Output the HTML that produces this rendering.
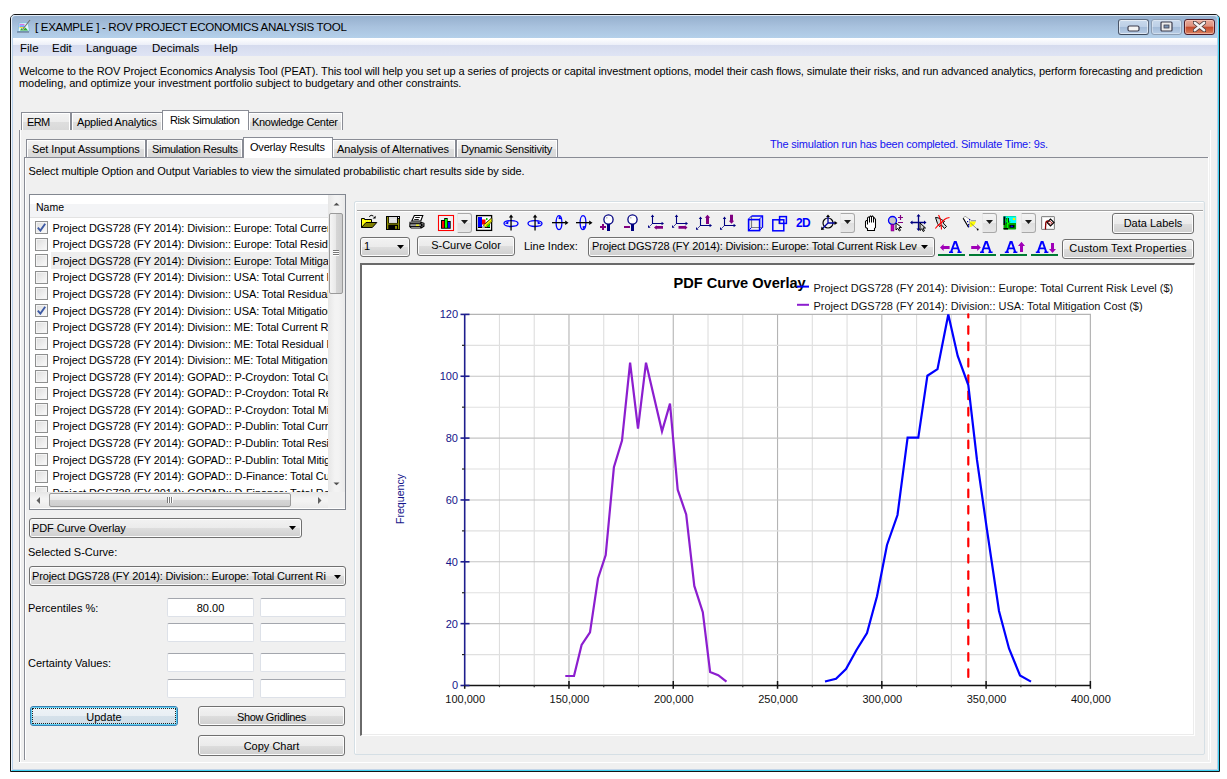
<!DOCTYPE html>
<html><head><meta charset="utf-8">
<style>
*{box-sizing:border-box;margin:0;padding:0}
html,body{width:1227px;height:779px;overflow:hidden;background:#fff;font-family:"Liberation Sans",sans-serif;font-size:11px;color:#000}
.a{position:absolute}
.t{position:absolute;white-space:pre;line-height:13px;font-size:11px}
.cbtn{position:absolute;height:16px;border:1px solid #44506a;border-radius:3px;background:linear-gradient(#c9d9ec,#bccfe6 50%,#a3bbd8 52%,#b8cde6)}
.tab{position:absolute;border:1px solid #898c95;border-bottom:none;background:linear-gradient(#f3f3f3,#ececec 50%,#dedede 52%,#d9d9d9);box-shadow:inset 1px 1px 0 #fff,inset -1px 0 0 #fff}
.tabsel{position:absolute;border:1px solid #898c95;border-bottom:none;background:#fff}
.btn{position:absolute;border:1px solid #707070;border-radius:3px;background:linear-gradient(#f2f2f2,#ebebeb 50%,#dddddd 52%,#cfcfcf);box-shadow:inset 0 0 0 1px #fcfcfc;text-align:center;line-height:17px}
.cb{position:absolute;width:13px;height:13px;border:1px solid #8e8f8f;background:linear-gradient(135deg,#dcdcdc,#fbfbfb);box-shadow:inset 0 0 0 1px #f4f4f4}
.combo{position:absolute;border:1px solid #707070;border-radius:3px;background:linear-gradient(#f2f2f2,#ebebeb 50%,#dddddd 52%,#cfcfcf);box-shadow:inset 0 0 0 1px #fcfcfc}
.tb{position:absolute;border:1px solid #dde1e8;border-top-color:#a3a6ad;border-radius:2px;background:#fff}
</style></head><body>
<!-- window frame -->
<div class="a" style="left:10px;top:14px;width:1210px;height:758px;border:1px solid #151515;border-radius:5px 5px 0 0;background:#b9d1ea"></div>
<div class="a" style="left:11px;top:15px;width:1208px;height:756px;border-left:1px solid #eef4fb;border-top:1px solid #e2ecf7;border-right:1px solid #3fd2f2;border-bottom:1px solid #3fd2f2;border-radius:4px 4px 0 0"></div>
<div class="a" style="left:12px;top:16px;width:1205px;height:22px;background:linear-gradient(#96b0ce,#a9c2de 50%,#b4d0ea);border-radius:4px 4px 0 0"></div>
<div class="t" style="left:35px;top:20.2px;color:#000;font-size:11.6px;letter-spacing:-0.33px">[ EXAMPLE ] - ROV PROJECT ECONOMICS ANALYSIS TOOL</div>
<div class="cbtn" style="left:1118px;top:19px;width:31px;border-color:#5d6a7e #5d6a7e #3f4a5c #4a5568;box-shadow:inset 0 0 0 1px rgba(255,255,255,0.55)"></div>
<div class="cbtn" style="left:1151px;top:19px;width:31px;border-color:#8c9db3;box-shadow:inset 0 0 0 1px rgba(255,255,255,0.35)"></div>
<div class="cbtn" style="left:1184px;top:19px;width:31px;border-color:#4e1c28;box-shadow:inset 0 0 0 1px rgba(255,220,210,0.5);background:linear-gradient(#e9aa9a,#dd917d 45%,#c3482a 50%,#d2704f 85%,#dc8a6e)"></div>
<svg class="a" style="left:1127px;top:25px" width="13" height="7"><rect x="1" y="1" width="11" height="5" rx="1.5" fill="#f4f4f4" stroke="#3d3d4d" stroke-width="1.2"/></svg>
<svg class="a" style="left:1160px;top:21px" width="13" height="11"><rect x="1" y="1" width="11" height="9" rx="1" fill="#ececec" stroke="#3d3d4d" stroke-width="1.2"/><rect x="4" y="4" width="5" height="3" fill="#7a93b3" stroke="#3d3d4d" stroke-width="0.8"/></svg>
<svg class="a" style="left:1193px;top:21px" width="13" height="11" viewBox="0 0 13 11"><path d="M1.5 1.5 L11.5 9.5 M11.5 1.5 L1.5 9.5" stroke="#4a3a3a" stroke-width="4" stroke-linecap="round"/><path d="M1.8 1.8 L11.2 9.2 M11.2 1.8 L1.8 9.2" stroke="#f4f4f4" stroke-width="2.4" stroke-linecap="round"/></svg>
<svg class="a" style="left:17px;top:19px" width="14" height="14" viewBox="0 0 14 14"><path d="M1 12.5 L2 4 L11 3.5 L12.5 12 Z" fill="#dff6ff" stroke="#7fb8d8" stroke-width="0.8"/><rect x="2.5" y="5" width="5" height="1.2" fill="#e070e0"/><rect x="2.5" y="6.5" width="5" height="1.2" fill="#4080ff"/><rect x="2.5" y="8" width="5" height="1.2" fill="#f0e040"/><path d="M3 11.5 L4.5 9 L6 11 L8.5 8.5 L11 11.5 Z" fill="#30b030"/><path d="M5.5 10.5 L13 1" stroke="#707070" stroke-width="1.1"/><path d="M0 13 H12" stroke="#202840" stroke-width="1" opacity="0.6"/></svg>
<!-- client -->
<div class="a" style="left:13px;top:38px;width:1204px;height:731px;background:#f0f0f0"></div>
<div class="a" style="left:13px;top:38px;width:1204px;height:18px;background:linear-gradient(#ffffff,#eceff8 38%,#d5dbee 40%,#dfe4f4)"></div>
<div class="a" style="left:12px;top:769px;width:1206px;height:1px;background:#c4d5e8"></div>
<div class="t" style="left:20px;top:42px;font-size:11.5px">File</div>
<div class="t" style="left:52px;top:42px;font-size:11.5px">Edit</div>
<div class="t" style="left:86px;top:42px;font-size:11.5px">Language</div>
<div class="t" style="left:152px;top:42px;font-size:11.5px">Decimals</div>
<div class="t" style="left:214px;top:42px;font-size:11.5px">Help</div>
<div class="t" style="left:19px;top:65px;letter-spacing:-0.1px">Welcome to the ROV Project Economics Analysis Tool (PEAT). This tool will help you set up a series of projects or capital investment options, model their cash flows, simulate their risks, and run advanced analytics, perform forecasting and prediction</div>
<div class="t" style="left:19px;top:77px;letter-spacing:-0.05px">modeling, and optimize your investment portfolio subject to budgetary and other constraints.</div>

<!-- outer tabs -->
<div class="a" style="left:19px;top:130px;width:1px;height:632px;background:#898c95"></div>
<div class="a" style="left:20px;top:130px;width:1px;height:632px;background:#fff"></div>
<div class="a" style="left:19px;top:762px;width:1192px;height:1px;background:#fff"></div>
<div class="a" style="left:1210px;top:130px;width:1px;height:633px;background:#fff"></div>
<div class="tab" style="left:21px;top:112px;width:50px;height:18px"></div>
<div class="tab" style="left:71px;top:112px;width:92px;height:18px"></div>
<div class="tab" style="left:248px;top:112px;width:95px;height:18px"></div>
<div class="tabsel" style="left:162px;top:110px;width:87px;height:20px"></div>
<div class="t" style="left:27px;top:116px;letter-spacing:-0.6px">ERM</div>
<div class="t" style="left:77px;top:116px;letter-spacing:-0.19px">Applied Analytics</div>
<div class="t" style="left:170px;top:114px;letter-spacing:-0.43px">Risk Simulation</div>
<div class="t" style="left:252px;top:116px;letter-spacing:-0.31px">Knowledge Center</div>

<!-- inner tabs -->
<div class="a" style="left:24px;top:157px;width:1184px;height:1px;background:#898c95"></div>
<div class="a" style="left:24px;top:157px;width:1px;height:603px;background:#898c95"></div>
<div class="a" style="left:25px;top:158px;width:1px;height:601px;background:#fff"></div>
<div class="a" style="left:1208px;top:157px;width:1px;height:603px;background:#fff"></div>

<div class="tab" style="left:26px;top:139px;width:120px;height:18px"></div>
<div class="tab" style="left:146px;top:139px;width:97px;height:18px"></div>
<div class="tab" style="left:332px;top:139px;width:124px;height:18px"></div>
<div class="tab" style="left:456px;top:139px;width:102px;height:18px"></div>
<div class="tabsel" style="left:243px;top:137px;width:90px;height:21px"></div>
<div class="t" style="left:32px;top:143px;letter-spacing:-0.08px">Set Input Assumptions</div>
<div class="t" style="left:152px;top:143px;letter-spacing:-0.3px">Simulation Results</div>
<div class="t" style="left:250px;top:141px;letter-spacing:-0.19px">Overlay Results</div>
<div class="t" style="left:337px;top:143px;letter-spacing:-0.05px">Analysis of Alternatives</div>
<div class="t" style="left:461px;top:143px;letter-spacing:-0.23px">Dynamic Sensitivity</div>
<div class="t" style="left:770px;top:138px;color:#1414f0;letter-spacing:-0.2px">The simulation run has been completed. Simulate Time: 9s.</div>
<div class="t" style="left:28.5px;top:165px;letter-spacing:-0.1px">Select multiple Option and Output Variables to view the simulated probabilistic chart results side by side.</div>

<!-- LEFT PANEL -->
<div id="left"></div>
<div class="a" style="left:29px;top:194px;width:317px;height:316px;border:1px solid #828790;background:#fff"></div>
<div class="a" style="left:30px;top:204px;width:298px;height:13px;background:#f3f4f6"></div>
<div class="a" style="left:30px;top:217px;width:298px;height:1px;background:#e3e3e3"></div>
<div class="t" style="left:36px;top:201px;font-size:10.5px">Name</div>
<div class="a" style="left:30px;top:217px;width:298px;height:275px;overflow:hidden">
<div class="a" style="left:21px;top:35.2px;width:277px;height:16.8px;background:#eeeeee"></div>
<div class="cb" style="left:5px;top:4.20px"></div>
<svg class="a" style="left:7px;top:6.20px" width="9" height="9" viewBox="0 0 9 9"><path d="M0.8 4.6 L3.4 7.6 L8.2 0.8" fill="none" stroke="#3d5aa4" stroke-width="1.9"/></svg>
<div class="t" style="left:22.5px;top:4.70px;letter-spacing:-0.1px">Project DGS728 (FY 2014): Division:: Europe: Total Current Risk Level ($)</div>
<div class="cb" style="left:5px;top:20.76px"></div>
<div class="t" style="left:22.5px;top:21.26px;letter-spacing:-0.1px">Project DGS728 (FY 2014): Division:: Europe: Total Residual Risk Level ($)</div>
<div class="cb" style="left:5px;top:37.32px"></div>
<div class="t" style="left:22.5px;top:37.82px;letter-spacing:-0.1px">Project DGS728 (FY 2014): Division:: Europe: Total Mitigation Cost ($)</div>
<div class="cb" style="left:5px;top:53.88px"></div>
<div class="t" style="left:22.5px;top:54.38px;letter-spacing:-0.1px">Project DGS728 (FY 2014): Division:: USA: Total Current Risk Level ($)</div>
<div class="cb" style="left:5px;top:70.44px"></div>
<div class="t" style="left:22.5px;top:70.94px;letter-spacing:-0.1px">Project DGS728 (FY 2014): Division:: USA: Total Residual Risk Level ($)</div>
<div class="cb" style="left:5px;top:87.00px"></div>
<svg class="a" style="left:7px;top:89.00px" width="9" height="9" viewBox="0 0 9 9"><path d="M0.8 4.6 L3.4 7.6 L8.2 0.8" fill="none" stroke="#3d5aa4" stroke-width="1.9"/></svg>
<div class="t" style="left:22.5px;top:87.50px;letter-spacing:-0.1px">Project DGS728 (FY 2014): Division:: USA: Total Mitigation Cost ($)</div>
<div class="cb" style="left:5px;top:103.56px"></div>
<div class="t" style="left:22.5px;top:104.06px;letter-spacing:-0.1px">Project DGS728 (FY 2014): Division:: ME: Total Current Risk Level ($)</div>
<div class="cb" style="left:5px;top:120.12px"></div>
<div class="t" style="left:22.5px;top:120.62px;letter-spacing:-0.1px">Project DGS728 (FY 2014): Division:: ME: Total Residual Risk Level ($)</div>
<div class="cb" style="left:5px;top:136.68px"></div>
<div class="t" style="left:22.5px;top:137.18px;letter-spacing:-0.1px">Project DGS728 (FY 2014): Division:: ME: Total Mitigation Cost ($)</div>
<div class="cb" style="left:5px;top:153.24px"></div>
<div class="t" style="left:22.5px;top:153.74px;letter-spacing:-0.1px">Project DGS728 (FY 2014): GOPAD:: P-Croydon: Total Current Risk Level ($)</div>
<div class="cb" style="left:5px;top:169.80px"></div>
<div class="t" style="left:22.5px;top:170.30px;letter-spacing:-0.1px">Project DGS728 (FY 2014): GOPAD:: P-Croydon: Total Residual Risk Level ($)</div>
<div class="cb" style="left:5px;top:186.36px"></div>
<div class="t" style="left:22.5px;top:186.86px;letter-spacing:-0.1px">Project DGS728 (FY 2014): GOPAD:: P-Croydon: Total Mitigation Cost ($)</div>
<div class="cb" style="left:5px;top:202.92px"></div>
<div class="t" style="left:22.5px;top:203.42px;letter-spacing:-0.1px">Project DGS728 (FY 2014): GOPAD:: P-Dublin: Total Current Risk Level ($)</div>
<div class="cb" style="left:5px;top:219.48px"></div>
<div class="t" style="left:22.5px;top:219.98px;letter-spacing:-0.1px">Project DGS728 (FY 2014): GOPAD:: P-Dublin: Total Residual Risk Level ($)</div>
<div class="cb" style="left:5px;top:236.04px"></div>
<div class="t" style="left:22.5px;top:236.54px;letter-spacing:-0.1px">Project DGS728 (FY 2014): GOPAD:: P-Dublin: Total Mitigation Cost ($)</div>
<div class="cb" style="left:5px;top:252.60px"></div>
<div class="t" style="left:22.5px;top:253.10px;letter-spacing:-0.1px">Project DGS728 (FY 2014): GOPAD:: D-Finance: Total Current Risk Level ($)</div>
<div class="cb" style="left:5px;top:269.16px"></div>
<div class="t" style="left:22.5px;top:269.66px;letter-spacing:-0.1px">Project DGS728 (FY 2014): GOPAD:: D-Finance: Total Residual Risk Level ($)</div>
</div>
<div class="a" style="left:328px;top:195px;width:17px;height:297px;background:linear-gradient(90deg,#e6e6e6,#f3f3f3 40%,#f3f3f3 60%,#eaeaea)"></div>
<svg class="a" style="left:332px;top:201px" width="9" height="6"><path d="M1.5 4.5 L4.5 1.8 L7.5 4.5 Z" fill="#505050"/></svg>
<svg class="a" style="left:332px;top:481px" width="9" height="6"><path d="M1.5 1.5 L4.5 4.2 L7.5 1.5 Z" fill="#505050"/></svg>
<div class="a" style="left:329px;top:213px;width:14px;height:81px;border:1px solid #9a9a9a;border-radius:2px;background:linear-gradient(90deg,#f5f5f5,#e8e8e8 50%,#d6d6d6 52%,#cdcdcd)"></div>
<div class="a" style="left:333px;top:250px;width:6px;height:1px;background:#777;box-shadow:0 2px 0 #777,0 4px 0 #777,0 1px 0 #fff,0 3px 0 #fff,0 5px 0 #fff"></div>
<div class="a" style="left:30px;top:492px;width:298px;height:16px;background:linear-gradient(#e6e6e6,#f3f3f3 40%,#f3f3f3 60%,#eaeaea)"></div>
<div class="a" style="left:328px;top:492px;width:17px;height:16px;background:#f0f0f0"></div>
<svg class="a" style="left:35px;top:496px" width="6" height="9"><path d="M5 1 L1.5 4.5 L5 8 Z" fill="#606060"/></svg>
<svg class="a" style="left:317px;top:496px" width="6" height="9"><path d="M1 1 L4.5 4.5 L1 8 Z" fill="#606060"/></svg>
<div class="a" style="left:49px;top:493px;width:242px;height:14px;border:1px solid #9a9a9a;border-radius:2px;background:linear-gradient(#f5f5f5,#e8e8e8 50%,#d6d6d6 52%,#cdcdcd)"></div>
<div class="a" style="left:167px;top:497px;width:1px;height:6px;background:#777;box-shadow:2px 0 0 #777,4px 0 0 #777,1px 0 0 #fff,3px 0 0 #fff,5px 0 0 #fff"></div>
<div class="combo" style="left:29px;top:518px;width:273px;height:20px"></div><div class="t" style="left:32px;top:521.5px;font-size:11px;letter-spacing:-0.1px;width:249px;overflow:hidden">PDF Curve Overlay</div><svg class="a" style="left:289px;top:526px" width="8" height="5"><path d="M0 0 L7 0 L3.5 4 Z" fill="#000"/></svg>
<div class="t" style="left:28px;top:546px">Selected S-Curve:</div>
<div class="combo" style="left:29px;top:566px;width:317px;height:20px"></div><div class="t" style="left:32px;top:570.0px;font-size:11px;letter-spacing:-0.15px;width:294px;overflow:hidden">Project DGS728 (FY 2014): Division:: Europe: Total Current Risk Level ($)</div><svg class="a" style="left:334px;top:574.5px" width="8" height="5"><path d="M0 0 L7 0 L3.5 4 Z" fill="#000"/></svg>
<div class="t" style="left:28px;top:602px">Percentiles %:</div>
<div class="t" style="left:28px;top:657px">Certainty Values:</div>
<div class="tb" style="left:167px;top:598px;width:87px;height:19px"></div>
<div class="tb" style="left:260px;top:598px;width:86px;height:19px"></div>
<div class="tb" style="left:167px;top:623px;width:87px;height:19px"></div>
<div class="tb" style="left:260px;top:623px;width:86px;height:19px"></div>
<div class="tb" style="left:167px;top:653px;width:87px;height:19px"></div>
<div class="tb" style="left:260px;top:653px;width:86px;height:19px"></div>
<div class="tb" style="left:167px;top:679px;width:87px;height:19px"></div>
<div class="tb" style="left:260px;top:679px;width:86px;height:19px"></div>
<div class="t" style="left:167px;top:602px;width:87px;text-align:center">80.00</div>
<div class="a" style="left:30px;top:706px;width:148px;height:20px;border:1px solid #3c7fb1;border-radius:3px;box-shadow:inset 0 0 0 1px #5fd4f7;background:linear-gradient(#eef3f7,#e9eff4 50%,#d5e1ea 52%,#cfdde7)"></div>
<div class="a" style="left:32px;top:708px;width:144px;height:16px;border:1px dotted #222"></div>
<div class="t" style="left:30px;top:711px;width:148px;text-align:center">Update</div>
<div class="btn" style="left:198px;top:706px;width:147px;height:20px"></div>
<div class="t" style="left:198px;top:711px;width:147px;text-align:center;letter-spacing:-0.36px">Show Gridlines</div>
<div class="btn" style="left:198px;top:735px;width:147px;height:21px"></div>
<div class="t" style="left:198px;top:740px;width:147px;text-align:center">Copy Chart</div>

<!-- RIGHT PANEL -->
<div class="a" style="left:354px;top:201px;width:851px;height:554px;border:1px solid #d5dfe5;border-radius:2px;box-shadow:inset 1px 1px 0 #fff"></div>
<div class="a" style="left:357px;top:210px;width:846px;height:1px;background:#a0a0a0"></div>
<div class="a" style="left:357px;top:211px;width:846px;height:1px;background:#fff"></div>
<svg class="a" style="left:358px;top:212px" width="22" height="20" viewBox="0 0 22 20">
<path d="M3.5 15.5 V6.5 H6.5 V7.5 H13.5 V10.5" fill="#ffff00" stroke="#000" stroke-width="1"/>
<path d="M4 9 H13 M4 12 H7" stroke="#fff" stroke-width="0.6" stroke-dasharray="1 1" opacity="0.6"/>
<path d="M3.5 15.5 L8 10.5 H18.8 L14.3 15.5 Z" fill="#808000" stroke="#000" stroke-width="1"/>
<path d="M11.2 4.6 Q13 2.2 15.4 4" fill="none" stroke="#000" stroke-width="1"/>
<path d="M14.6 6.6 L17.6 3.8 V6.6 Z" fill="#000"/>
</svg>
<svg class="a" style="left:383px;top:212px" width="22" height="20" viewBox="0 0 22 20">
<rect x="3" y="4" width="14" height="14" fill="#000"/>
<rect x="4" y="5" width="1.3" height="12" fill="#8c8c00"/><rect x="15" y="7" width="1.2" height="10" fill="#8c8c00"/>
<rect x="4" y="11.5" width="12.2" height="1.2" fill="#8c8c00"/>
<rect x="6" y="5" width="8" height="6" fill="#d6d6d6"/>
<path d="M6.5 5.5 h1 v1 h-1z M8.5 5.5 h1 v1 h-1z M10.5 5.5 h1 v1 h-1z M12.5 5.5 h1 v1 h-1z M7.5 7 h1 v1 h-1z M9.5 7 h1 v1 h-1z M11.5 7 h1 v1 h-1z M6.5 8.5 h1 v1 h-1z M8.5 8.5 h1 v1 h-1z M10.5 8.5 h1 v1 h-1z M12.5 8.5 h1 v1 h-1z" fill="#fff"/>
<rect x="12" y="14" width="2" height="2.8" fill="#8c8c00"/>
<rect x="15" y="5" width="1" height="1" fill="#fff"/>
</svg>
<svg class="a" style="left:406px;top:212px" width="22" height="20" viewBox="0 0 22 20">
<path d="M8.3 3.5 H16.8 L14.8 9 H5.8 Z" fill="#fff" stroke="#000" stroke-width="1.1"/>
<path d="M9.2 5.5 H13.8 M8.2 7.5 H12.8" stroke="#000" stroke-width="0.9"/>
<path d="M3.5 9.8 H15.5 L18.5 11 V14.5 L15.5 16.5 H5 L3.2 14.8 Z" fill="#000"/>
<rect x="4.3" y="10.3" width="10" height="0.9" fill="#9a9a9a"/>
<rect x="4.3" y="12.2" width="10.5" height="1.9" fill="#9a9a9a"/>
<rect x="10" y="12.6" width="3" height="1.2" fill="#ffff00"/>
<rect x="5.2" y="15" width="9" height="0.9" fill="#9a9a9a"/>
<path d="M15.5 11.5 L17 11.2 V13.5 L15.5 15" stroke="#9a9a9a" stroke-width="0.8" fill="none"/>
</svg>
<svg class="a" style="left:436px;top:212px" width="22" height="20" viewBox="0 0 22 20">
<rect x="2.5" y="3.5" width="15" height="15" fill="#f0fbfb" stroke="#ff0000" stroke-width="1.1"/>
<rect x="4" y="5" width="12" height="12" fill="#efefef"/>
<path d="M5 8 H8.2 V6 H11.7 V9 H14.7 V16.7 H5 Z" fill="#000"/>
<rect x="6" y="9" width="2.2" height="6.8" fill="#ff0000"/>
<rect x="9" y="7" width="2.2" height="8.8" fill="#00ff00"/>
<rect x="12" y="10" width="2" height="5.8" fill="#0000ff"/>
</svg>
<svg class="a" style="left:473px;top:212px" width="22" height="20" viewBox="0 0 22 20">
<rect x="3.6" y="3.6" width="15" height="14.8" fill="#fff" stroke="#000" stroke-width="1.3"/>
<rect x="5" y="5" width="4" height="10.5" fill="#0000ff"/>
<path d="M9 7.5 H12.5 V12.5 H9 Z" fill="#ff0000"/>
<rect x="13" y="6" width="1.5" height="2" fill="#00d000"/><rect x="14" y="12" width="3" height="3" fill="#00e000"/>
<rect x="5" y="15" width="12" height="1" fill="#000"/>
<path d="M18.8 5.8 L10.3 13.2 L13 15.5 L19 9.5 Z" fill="#ffff00" stroke="#000" stroke-width="0.6"/>
<path d="M12 12 L18 6.5 M13.2 13.5 L18.8 8.5" stroke="#000" stroke-width="0.7" stroke-dasharray="0.8 0.8"/>
<rect x="9" y="14.2" width="2.8" height="2" fill="#b0b0b0"/>
</svg>
<div class="a" style="left:457px;top:213px;width:15px;height:20px;border:1px solid #a9a9a9;border-left-color:#e8e8e8;border-radius:0 3px 3px 0;background:linear-gradient(#f3f3f3,#ececec 50%,#dfdfdf 52%,#e6e6e6)"></div><svg class="a" style="left:461px;top:220px" width="8" height="5"><path d="M0 0 L7 0 L3.5 4 Z" fill="#1a1a1a"/></svg>
<svg class="a" style="left:503px;top:214px" width="16" height="17" viewBox="0 0 16 17"><ellipse cx="8" cy="9.6" rx="7" ry="2.9" fill="none" stroke="#0000ff" stroke-width="1.3"/><path d="M2 9.6 L5.6 6.8 L5.2 10.2 Z" fill="#0000ff"/><rect x="7.4" y="2.5" width="1.3" height="14" fill="#000"/><path d="M8.05 0.6 L5.8 3.6 H10.3 Z" fill="#000"/></svg>
<svg class="a" style="left:527px;top:214px" width="16" height="17" viewBox="0 0 16 17"><ellipse cx="8" cy="9.6" rx="7" ry="2.9" fill="none" stroke="#0000ff" stroke-width="1.3"/><path d="M14 9.6 L10.4 6.8 L10.8 10.2 Z" fill="#0000ff"/><rect x="7.4" y="2.5" width="1.3" height="14" fill="#000"/><path d="M8.05 0.6 L5.8 3.6 H10.3 Z" fill="#000"/></svg>
<svg class="a" style="left:552px;top:214px" width="17" height="17" viewBox="0 0 17 17"><ellipse cx="7" cy="8.6" rx="2.9" ry="7" fill="none" stroke="#0000ff" stroke-width="1.3"/><path d="M7 1.6 L10 5.2 L6.6 5 Z" fill="#0000ff"/><rect x="0" y="8" width="13.5" height="1.3" fill="#000"/><path d="M16.5 8.65 L13.2 6.4 V10.9 Z" fill="#000"/></svg>
<svg class="a" style="left:576px;top:214px" width="17" height="17" viewBox="0 0 17 17"><ellipse cx="7" cy="8.6" rx="2.9" ry="7" fill="none" stroke="#0000ff" stroke-width="1.3"/><path d="M7 15.6 L10 12 L6.6 12.2 Z" fill="#0000ff"/><rect x="0" y="8" width="13.5" height="1.3" fill="#000"/><path d="M16.5 8.65 L13.2 6.4 V10.9 Z" fill="#000"/></svg>
<svg class="a" style="left:600px;top:214px" width="16" height="17" viewBox="0 0 16 17"><circle cx="8.5" cy="5.5" r="4.6" fill="#fff" stroke="#000080" stroke-width="1.3"/><rect x="6" y="3" width="1.5" height="1.5" fill="#c0c0c0"/><rect x="7" y="10" width="3" height="7" fill="#000080"/><rect x="0" y="12" width="6" height="2" fill="#800080"/><rect x="2" y="10" width="2" height="6" fill="#800080"/></svg>
<svg class="a" style="left:624px;top:214px" width="16" height="17" viewBox="0 0 16 17"><circle cx="8.5" cy="5.5" r="4.6" fill="#fff" stroke="#000080" stroke-width="1.3"/><rect x="6" y="3" width="1.5" height="1.5" fill="#c0c0c0"/><rect x="7" y="10" width="3" height="7" fill="#000080"/><rect x="0" y="12" width="6" height="2" fill="#800080"/></svg>
<svg class="a" style="left:644px;top:212px" width="22" height="20" viewBox="0 0 22 20"><path d="M8.5 3.8 V11.5 H18.8" fill="none" stroke="#000080" stroke-width="1.1"/><path d="M8.5 2.5 L6.8 5.0 H10.2 Z M20 11.5 L17.6 9.8 V13.2 Z" fill="#000080"/><path d="M8 12.0 L5.5 14.5" stroke="#000080" stroke-width="1" stroke-dasharray="1 0.6"/><path d="M4 13.0 V15.7 H6.6 Z" fill="#000080"/><path d="M10 15.5 L12.6 13.2 V14 H19 V16.8 H12.6 V17.8 Z" fill="#800080"/></svg>
<svg class="a" style="left:668px;top:212px" width="22" height="20" viewBox="0 0 22 20"><path d="M8.5 3.8 V11.5 H18.8" fill="none" stroke="#000080" stroke-width="1.1"/><path d="M8.5 2.5 L6.8 5.0 H10.2 Z M20 11.5 L17.6 9.8 V13.2 Z" fill="#000080"/><path d="M8 12.0 L5.5 14.5" stroke="#000080" stroke-width="1" stroke-dasharray="1 0.6"/><path d="M4 13.0 V15.7 H6.6 Z" fill="#000080"/><path d="M19.5 15.5 L16.9 13.2 V14 H10.5 V16.8 H16.9 V17.8 Z" fill="#800080"/></svg>
<svg class="a" style="left:692px;top:212px" width="22" height="20" viewBox="0 0 22 20"><path d="M8.5 5.8 V13.5 H18.8" fill="none" stroke="#000080" stroke-width="1.1"/><path d="M8.5 4.5 L6.8 7.0 H10.2 Z M20 13.5 L17.6 11.8 V15.2 Z" fill="#000080"/><path d="M8 14.0 L5.5 16.5" stroke="#000080" stroke-width="1" stroke-dasharray="1 0.6"/><path d="M4 15.0 V17.7 H6.6 Z" fill="#000080"/><path d="M15.5 2.8 L18.2 5.8 H17 V12 H14 V5.8 H12.8 Z" fill="#800080"/></svg>
<svg class="a" style="left:716px;top:212px" width="22" height="20" viewBox="0 0 22 20"><path d="M8.5 5.8 V13.5 H18.8" fill="none" stroke="#000080" stroke-width="1.1"/><path d="M8.5 4.5 L6.8 7.0 H10.2 Z M20 13.5 L17.6 11.8 V15.2 Z" fill="#000080"/><path d="M8 14.0 L5.5 16.5" stroke="#000080" stroke-width="1" stroke-dasharray="1 0.6"/><path d="M4 15.0 V17.7 H6.6 Z" fill="#000080"/><path d="M15.5 11.8 L18.2 8.8 H17 V2.8 H14 V8.8 H12.8 Z" fill="#800080"/></svg>
<svg class="a" style="left:747px;top:215px" width="17" height="17" viewBox="0 0 17 17">
<path d="M4.5 1 V12.5 H16" fill="none" stroke="#808080" stroke-width="1.2"/>
<path d="M1.5 4 L4.5 1 M12.5 4 L15.5 1 M12.5 15.5 L15.5 12.5 M1.5 15.5 L4.5 12.5" stroke="#0000ff" stroke-width="1"/>
<path d="M4.5 1 H15.5 V12.5" fill="none" stroke="#0000ff" stroke-width="1.4"/>
<rect x="1.6" y="4.6" width="11" height="11" fill="none" stroke="#0000ff" stroke-width="1.6"/>
</svg>
<svg class="a" style="left:771px;top:215px" width="17" height="17" viewBox="0 0 17 17">
<path d="M8 9 V4.5 H12" fill="none" stroke="#808080" stroke-width="1.2"/>
<rect x="8.6" y="1.6" width="6.8" height="6.8" fill="none" stroke="#0000ff" stroke-width="1.5"/>
<rect x="1.8" y="4.8" width="11" height="11" fill="none" stroke="#0000ff" stroke-width="1.5"/>
</svg>
<div class="t" style="left:796px;top:217px;font-size:12px;font-weight:bold;color:#0000ff;letter-spacing:-0.6px">2D</div>
<svg class="a" style="left:820px;top:214px" width="18" height="17" viewBox="0 0 18 17">
<circle cx="8" cy="9" r="5" fill="none" stroke="#000" stroke-width="1.2"/>
<path d="M8 2 V9 H15 M8 9 L2 15" fill="none" stroke="#0000a0" stroke-width="1.3"/>
<path d="M8 0.5 L6 3 H10 Z M17.5 9 L14.5 7 V11 Z M1 16 L1.5 12.5 L4.5 15.5 Z" fill="#000"/>
</svg>
<div class="a" style="left:840px;top:213px;width:15px;height:20px;border:1px solid #a9a9a9;border-left-color:#e8e8e8;border-radius:0 3px 3px 0;background:linear-gradient(#f3f3f3,#ececec 50%,#dfdfdf 52%,#e6e6e6)"></div><svg class="a" style="left:844px;top:220px" width="8" height="5"><path d="M0 0 L7 0 L3.5 4 Z" fill="#1a1a1a"/></svg>
<svg class="a" style="left:910px;top:214px" width="17" height="18" viewBox="0 0 17 18">
<path d="M1 8.5 H15 M8.5 1 V16" stroke="#000080" stroke-width="1.3"/>
<path d="M8.5 0 L6.5 2.5 H10.5 Z M8.5 17 L6.5 14.5 H10.5 Z M0 8.5 L2.5 6.5 V10.5 Z M16.5 8.5 L14 6.5 V10.5 Z" fill="#000080"/>
<path d="M10 9 L10 16.5 L11.8 14.8 L13.2 17.5 L14.4 16.8 L13 14 L15.5 14 Z" fill="#d0d0d0" stroke="#000" stroke-width="1"/>
</svg>
<svg class="a" style="left:860px;top:212px" width="22" height="20" viewBox="0 0 22 20">
<path d="M5.5 15 V9.5 L6.5 8.5 H7.5 V6 L8.5 5 H9.5 L10.5 4 L11.5 4.6 L12.5 4 L13.5 5 L14.5 6 L15.5 7.5 V15.5 L14.5 16.5 V18.5 H7.5 V16.5 L6.2 15.8 Z" fill="#fff" stroke="#000" stroke-width="1.05"/>
<path d="M7.5 8.5 V12.5 M9.5 5 V10.5 M11.5 4.6 V10.5 M13.5 5 V10.5" stroke="#000" stroke-width="1"/>
</svg>
<svg class="a" style="left:932px;top:212px" width="22" height="20" viewBox="0 0 22 20">
<path d="M3.5 5.5 L6 5.8 L9.5 7.5 L12.5 9.5 L11 10.8 L14.5 14.5 L12.5 16.5 L9.5 13 L7.5 14.5 L5.5 11.5 Z" fill="#d4dcdc" stroke="#000" stroke-width="1"/>
<path d="M6.5 3 L7.5 5 L8.5 8 L9 11.5 L9.5 17.5" fill="none" stroke="#ff0000" stroke-width="1.1"/>
<path d="M3.3 16.5 L6 13.5 L10 10 L12.5 7.5 L14.5 6.3 L17.5 5.5" fill="none" stroke="#ff0000" stroke-width="1.1"/>
</svg>
<svg class="a" style="left:960px;top:212px" width="22" height="20" viewBox="0 0 22 20">
<path d="M5 4.2 L10 7.6 L8.5 15.2 L3.2 6.2 Z" fill="#fff" stroke="#909090" stroke-width="0.8"/>
<path d="M3.2 6.2 L8.5 15.3" stroke="#000" stroke-width="1.1"/>
<rect x="9" y="7" width="1.2" height="1.2" fill="#0000a0"/><rect x="7" y="9" width="1.2" height="1.2" fill="#0000a0"/><rect x="8" y="12" width="1.2" height="1.5" fill="#0000a0"/><rect x="8" y="14" width="1.2" height="1.2" fill="#0000a0"/>
<rect x="11" y="8.2" width="5" height="1.3" fill="#8a8a98"/>
<path d="M10 9.5 H16 L14.5 12.5 L11 15 H10 Z" fill="#ffff00"/>
<path d="M10.5 11 L17.8 17.6" stroke="#707070" stroke-width="0.8"/>
<circle cx="17.7" cy="17.5" r="0.9" fill="#000"/>
</svg>
<div class="a" style="left:982px;top:213px;width:15px;height:20px;border:1px solid #a9a9a9;border-left-color:#e8e8e8;border-radius:0 3px 3px 0;background:linear-gradient(#f3f3f3,#ececec 50%,#dfdfdf 52%,#e6e6e6)"></div><svg class="a" style="left:986px;top:220px" width="8" height="5"><path d="M0 0 L7 0 L3.5 4 Z" fill="#1a1a1a"/></svg>
<svg class="a" style="left:1000px;top:212px" width="20" height="20" viewBox="0 0 20 20">
<rect x="3.5" y="4" width="12.6" height="13.5" rx="0.8" fill="#00a000"/>
<rect x="3.5" y="4.3" width="12.6" height="6.7" fill="#00ffff"/>
<path d="M3.5 4.5 H5.5 V11 H3.5 Z" fill="#000"/>
<path d="M6.2 6 H9 V11.5 H6.2 Z" fill="#000" opacity="0.85"/>
<path d="M3.5 16 H8 V17.5 H3.5 Z M9.5 13 H14.5 V15.8 H9.5 Z M3.5 11 H5 V13 H3.5 Z" fill="#000"/>
<circle cx="14" cy="7" r="1.3" fill="#ffe800"/>
<path d="M7.5 5.5 V16 M7.5 10.5 L5.8 8.6 V7.2 M7.5 12.5 L9.8 10 V8.8" fill="none" stroke="#00ff00" stroke-width="1.1"/>
<ellipse cx="11.8" cy="14.4" rx="1.3" ry="0.8" fill="#0000ff"/>
</svg>
<div class="a" style="left:1041px;top:216px;width:14px;height:14px;border:1px solid #8a8a8a;border-radius:1px;background:#fff;box-shadow:inset 0 0 0 1px #e8e8e8"></div>
<svg class="a" style="left:1040px;top:212px" width="20" height="20" viewBox="0 0 20 20">
<path d="M7 10.5 L10.5 7 L14 10.5 L10.5 14 Z" fill="#fff" stroke="#000" stroke-width="1.1"/>
<path d="M8.3 10.5 L10.5 12.7 M9.8 9 L12.3 11.5 M8.8 10 L10 8.8 M10.8 11.8 L12 10.6" stroke="#a00000" stroke-width="0.9"/>
<path d="M8 9 Q6 9 5.8 11 L5.5 15.5 V17.5" fill="none" stroke="#8c0000" stroke-width="1.3"/>
<path d="M5.2 12 L6.2 12.5" stroke="#8c0000" stroke-width="1"/>
</svg>
<svg class="a" style="left:887px;top:214px" width="18" height="18" viewBox="0 0 18 18">
<circle cx="5.5" cy="6.5" r="4" fill="#c8c8c8" stroke="#0000ff" stroke-width="1.3"/>
<rect x="4" y="10.5" width="3" height="6.5" fill="#c000c0" stroke="#600060" stroke-width="0.5"/>
<path d="M11 3.5 H16 M13.5 1 V6 M11 8.5 H16" stroke="#800080" stroke-width="1.2"/>
<path d="M9 9 L9 16 L10.8 14.3 L12.3 17 L13.5 16.3 L12 13.6 L14.5 13.5 Z" fill="#fff" stroke="#000" stroke-width="1"/>
</svg>
<div class="a" style="left:1021px;top:213px;width:15px;height:20px;border:1px solid #a9a9a9;border-left-color:#e8e8e8;border-radius:0 3px 3px 0;background:linear-gradient(#f3f3f3,#ececec 50%,#dfdfdf 52%,#e6e6e6)"></div><svg class="a" style="left:1025px;top:220px" width="8" height="5"><path d="M0 0 L7 0 L3.5 4 Z" fill="#1a1a1a"/></svg>
<div class="btn" style="left:1112px;top:213px;width:82px;height:21px"></div>
<div class="t" style="left:1112px;top:217px;width:82px;text-align:center">Data Labels</div>
<div class="combo" style="left:360px;top:237px;width:50px;height:20px"></div>
<div class="t" style="left:364px;top:240px">1</div>
<svg class="a" style="left:397px;top:245px" width="8" height="5"><path d="M0 0 L7 0 L3.5 4 Z" fill="#000"/></svg>
<div class="btn" style="left:417px;top:236px;width:98px;height:20px"></div>
<div class="t" style="left:417px;top:239px;width:98px;text-align:center">S-Curve Color</div>
<div class="t" style="left:524px;top:240px">Line Index:</div>
<div class="combo" style="left:588px;top:237px;width:347px;height:20px"></div>
<div class="t" style="left:592px;top:240px;width:325px;overflow:hidden;letter-spacing:-0.15px">Project DGS728 (FY 2014): Division:: Europe: Total Current Risk Level ($)</div>
<svg class="a" style="left:921px;top:245px" width="8" height="5"><path d="M0 0 L7 0 L3.5 4 Z" fill="#000"/></svg>
<svg class="a" style="left:938px;top:241px" width="28" height="16" viewBox="0 0 28 16"><g transform="translate(11 0)" fill="#0000ff"><path d="M5 0 H7.6 L11.3 10.6 H12.6 V12 H8.4 V10.6 H9.2 L8.4 8.2 H4.1 L3.3 10.6 H4.1 V12 H0 V10.6 H1.2 Z M4.6 6.6 H7.9 L6.3 2.2 Z"/></g><path d="M2 6.4 L5.6 3 V5 H11.6 V8 H5.6 V9.9 Z" fill="#a000b8"/><rect x="0" y="13" width="27" height="2" fill="#007a33"/></svg>
<svg class="a" style="left:969px;top:241px" width="28" height="16" viewBox="0 0 28 16"><g transform="translate(11 0)" fill="#0000ff"><path d="M5 0 H7.6 L11.3 10.6 H12.6 V12 H8.4 V10.6 H9.2 L8.4 8.2 H4.1 L3.3 10.6 H4.1 V12 H0 V10.6 H1.2 Z M4.6 6.6 H7.9 L6.3 2.2 Z"/></g><path d="M11.8 6.4 L8.2 3 V5 H2.2 V8 H8.2 V9.9 Z" fill="#a000b8"/><rect x="0" y="13" width="27" height="2" fill="#007a33"/></svg>
<svg class="a" style="left:1000px;top:241px" width="28" height="16" viewBox="0 0 28 16"><g transform="translate(4.8 0)" fill="#0000ff"><path d="M5 0 H7.6 L11.3 10.6 H12.6 V12 H8.4 V10.6 H9.2 L8.4 8.2 H4.1 L3.3 10.6 H4.1 V12 H0 V10.6 H1.2 Z M4.6 6.6 H7.9 L6.3 2.2 Z"/></g><path d="M21.5 0.8 L25 5 H23 V11 H20 V5 H18 Z" fill="#a000b8"/><rect x="0" y="13" width="27" height="2" fill="#007a33"/></svg>
<svg class="a" style="left:1031px;top:241px" width="28" height="16" viewBox="0 0 28 16"><g transform="translate(4.8 0)" fill="#0000ff"><path d="M5 0 H7.6 L11.3 10.6 H12.6 V12 H8.4 V10.6 H9.2 L8.4 8.2 H4.1 L3.3 10.6 H4.1 V12 H0 V10.6 H1.2 Z M4.6 6.6 H7.9 L6.3 2.2 Z"/></g><path d="M21.5 11.9 L25 7.9 H23 V2 H20 V7.9 H18 Z" fill="#a000b8"/><rect x="0" y="13" width="27" height="2" fill="#007a33"/></svg>
<div class="btn" style="left:1062px;top:239px;width:132px;height:20px"></div>
<div class="t" style="left:1062px;top:242px;width:132px;text-align:center;letter-spacing:0.15px">Custom Text Properties</div>
<div class="a" style="left:360px;top:263px;width:835px;height:473px;border-top:2px solid #6a6a6a;border-left:2px solid #6a6a6a;border-right:1px solid #fff;border-bottom:1px solid #fff;background:#fff;box-shadow:inset -1px -1px 0 #ececec"></div>
<div id="chart"></div>
<svg class="a" style="left:362px;top:265px" width="832" height="470" viewBox="362 265 832 470">
<line x1="499.46" y1="314.40" x2="499.46" y2="685.50" stroke="#dedede" stroke-width="1.1"/>
<line x1="534.22" y1="314.40" x2="534.22" y2="685.50" stroke="#dedede" stroke-width="1.1"/>
<line x1="568.98" y1="314.40" x2="568.98" y2="685.50" stroke="#b4b4b4" stroke-width="1.1"/>
<line x1="603.74" y1="314.40" x2="603.74" y2="685.50" stroke="#dedede" stroke-width="1.1"/>
<line x1="638.50" y1="314.40" x2="638.50" y2="685.50" stroke="#dedede" stroke-width="1.1"/>
<line x1="673.26" y1="314.40" x2="673.26" y2="685.50" stroke="#b4b4b4" stroke-width="1.1"/>
<line x1="708.02" y1="314.40" x2="708.02" y2="685.50" stroke="#dedede" stroke-width="1.1"/>
<line x1="742.78" y1="314.40" x2="742.78" y2="685.50" stroke="#dedede" stroke-width="1.1"/>
<line x1="777.54" y1="314.40" x2="777.54" y2="685.50" stroke="#b4b4b4" stroke-width="1.1"/>
<line x1="812.30" y1="314.40" x2="812.30" y2="685.50" stroke="#dedede" stroke-width="1.1"/>
<line x1="847.06" y1="314.40" x2="847.06" y2="685.50" stroke="#dedede" stroke-width="1.1"/>
<line x1="881.82" y1="314.40" x2="881.82" y2="685.50" stroke="#b4b4b4" stroke-width="1.1"/>
<line x1="916.58" y1="314.40" x2="916.58" y2="685.50" stroke="#dedede" stroke-width="1.1"/>
<line x1="951.34" y1="314.40" x2="951.34" y2="685.50" stroke="#dedede" stroke-width="1.1"/>
<line x1="986.10" y1="314.40" x2="986.10" y2="685.50" stroke="#b4b4b4" stroke-width="1.1"/>
<line x1="1020.86" y1="314.40" x2="1020.86" y2="685.50" stroke="#dedede" stroke-width="1.1"/>
<line x1="1055.62" y1="314.40" x2="1055.62" y2="685.50" stroke="#dedede" stroke-width="1.1"/>
<line x1="464.70" y1="654.58" x2="1090.38" y2="654.58" stroke="#e0e0e0" stroke-width="1.1"/>
<line x1="464.70" y1="623.65" x2="1090.38" y2="623.65" stroke="#c4c4c4" stroke-width="1.1"/>
<line x1="464.70" y1="592.73" x2="1090.38" y2="592.73" stroke="#e0e0e0" stroke-width="1.1"/>
<line x1="464.70" y1="561.80" x2="1090.38" y2="561.80" stroke="#c4c4c4" stroke-width="1.1"/>
<line x1="464.70" y1="530.88" x2="1090.38" y2="530.88" stroke="#e0e0e0" stroke-width="1.1"/>
<line x1="464.70" y1="499.95" x2="1090.38" y2="499.95" stroke="#c4c4c4" stroke-width="1.1"/>
<line x1="464.70" y1="469.02" x2="1090.38" y2="469.02" stroke="#e0e0e0" stroke-width="1.1"/>
<line x1="464.70" y1="438.10" x2="1090.38" y2="438.10" stroke="#c4c4c4" stroke-width="1.1"/>
<line x1="464.70" y1="407.18" x2="1090.38" y2="407.18" stroke="#e0e0e0" stroke-width="1.1"/>
<line x1="464.70" y1="376.25" x2="1090.38" y2="376.25" stroke="#c4c4c4" stroke-width="1.1"/>
<line x1="464.70" y1="345.33" x2="1090.38" y2="345.33" stroke="#e0e0e0" stroke-width="1.1"/>
<path d="M464.70 314.40 H1090.38 V685.50" fill="none" stroke="#b4b4b4" stroke-width="1.2"/>
<line x1="968.3" y1="677.00" x2="968.3" y2="669.40" stroke="#ff0000" stroke-width="2.2" stroke-linecap="round"/>
<line x1="968.3" y1="660.66" x2="968.3" y2="653.06" stroke="#ff0000" stroke-width="2.2" stroke-linecap="round"/>
<line x1="968.3" y1="644.32" x2="968.3" y2="636.72" stroke="#ff0000" stroke-width="2.2" stroke-linecap="round"/>
<line x1="968.3" y1="627.98" x2="968.3" y2="620.38" stroke="#ff0000" stroke-width="2.2" stroke-linecap="round"/>
<line x1="968.3" y1="611.64" x2="968.3" y2="604.04" stroke="#ff0000" stroke-width="2.2" stroke-linecap="round"/>
<line x1="968.3" y1="595.30" x2="968.3" y2="587.70" stroke="#ff0000" stroke-width="2.2" stroke-linecap="round"/>
<line x1="968.3" y1="578.96" x2="968.3" y2="571.36" stroke="#ff0000" stroke-width="2.2" stroke-linecap="round"/>
<line x1="968.3" y1="562.62" x2="968.3" y2="555.02" stroke="#ff0000" stroke-width="2.2" stroke-linecap="round"/>
<line x1="968.3" y1="546.28" x2="968.3" y2="538.68" stroke="#ff0000" stroke-width="2.2" stroke-linecap="round"/>
<line x1="968.3" y1="529.94" x2="968.3" y2="522.34" stroke="#ff0000" stroke-width="2.2" stroke-linecap="round"/>
<line x1="968.3" y1="513.60" x2="968.3" y2="506.00" stroke="#ff0000" stroke-width="2.2" stroke-linecap="round"/>
<line x1="968.3" y1="497.26" x2="968.3" y2="489.66" stroke="#ff0000" stroke-width="2.2" stroke-linecap="round"/>
<line x1="968.3" y1="480.92" x2="968.3" y2="473.32" stroke="#ff0000" stroke-width="2.2" stroke-linecap="round"/>
<line x1="968.3" y1="464.58" x2="968.3" y2="456.98" stroke="#ff0000" stroke-width="2.2" stroke-linecap="round"/>
<line x1="968.3" y1="448.24" x2="968.3" y2="440.64" stroke="#ff0000" stroke-width="2.2" stroke-linecap="round"/>
<line x1="968.3" y1="431.90" x2="968.3" y2="424.30" stroke="#ff0000" stroke-width="2.2" stroke-linecap="round"/>
<line x1="968.3" y1="415.56" x2="968.3" y2="407.96" stroke="#ff0000" stroke-width="2.2" stroke-linecap="round"/>
<line x1="968.3" y1="399.22" x2="968.3" y2="391.62" stroke="#ff0000" stroke-width="2.2" stroke-linecap="round"/>
<line x1="968.3" y1="382.88" x2="968.3" y2="375.28" stroke="#ff0000" stroke-width="2.2" stroke-linecap="round"/>
<line x1="968.3" y1="366.54" x2="968.3" y2="358.94" stroke="#ff0000" stroke-width="2.2" stroke-linecap="round"/>
<line x1="968.3" y1="350.20" x2="968.3" y2="342.60" stroke="#ff0000" stroke-width="2.2" stroke-linecap="round"/>
<line x1="968.3" y1="333.86" x2="968.3" y2="326.26" stroke="#ff0000" stroke-width="2.2" stroke-linecap="round"/>
<line x1="968.3" y1="317.52" x2="968.3" y2="314.40" stroke="#ff0000" stroke-width="2.2" stroke-linecap="round"/>
<polyline points="565.3,676.0 574.0,676.0 581.6,645.0 590.0,632.4 598.0,578.5 605.7,555.0 613.9,467.3 622.0,440.5 630.1,362.7 638.0,428.5 646.0,362.7 662.0,431.3 670.0,403.6 677.7,489.7 686.2,514.5 694.3,585.9 702.8,612.2 710.1,672.0 718.2,675.1 726.5,681.7" fill="none" stroke="#8c1ecf" stroke-width="2.2" stroke-linejoin="miter"/>
<polyline points="825.0,681.5 836.0,678.8 846.0,669.0 856.5,650.0 867.0,633.0 877.0,596.3 887.0,545.0 897.5,515.0 907.6,437.6 918.3,437.6 927.4,375.7 937.5,369.2 948.3,314.5 957.7,356.0 968.3,385.0 977.0,460.0 987.0,530.0 999.0,611.0 1009.0,648.5 1020.0,675.4 1031.0,681.6" fill="none" stroke="#0000ff" stroke-width="2.2" stroke-linejoin="miter"/>
<line x1="464.70" y1="313.90" x2="464.70" y2="686.00" stroke="#1e1e8e" stroke-width="1.6"/>
<line x1="464.70" y1="685.50" x2="1090.38" y2="685.50" stroke="#141414" stroke-width="1.4"/>
<line x1="460.5" y1="685.50" x2="469.5" y2="685.50" stroke="#1e1e8e" stroke-width="1.6"/>
<text x="458" y="689.40" text-anchor="end" font-size="11" fill="#14148a" font-family="Liberation Sans">0</text>
<line x1="462" y1="654.58" x2="464.70" y2="654.58" stroke="#222" stroke-width="1.2"/>
<line x1="460.5" y1="623.65" x2="469.5" y2="623.65" stroke="#1e1e8e" stroke-width="1.6"/>
<text x="458" y="627.55" text-anchor="end" font-size="11" fill="#14148a" font-family="Liberation Sans">20</text>
<line x1="462" y1="592.73" x2="464.70" y2="592.73" stroke="#222" stroke-width="1.2"/>
<line x1="460.5" y1="561.80" x2="469.5" y2="561.80" stroke="#1e1e8e" stroke-width="1.6"/>
<text x="458" y="565.70" text-anchor="end" font-size="11" fill="#14148a" font-family="Liberation Sans">40</text>
<line x1="462" y1="530.88" x2="464.70" y2="530.88" stroke="#222" stroke-width="1.2"/>
<line x1="460.5" y1="499.95" x2="469.5" y2="499.95" stroke="#1e1e8e" stroke-width="1.6"/>
<text x="458" y="503.85" text-anchor="end" font-size="11" fill="#14148a" font-family="Liberation Sans">60</text>
<line x1="462" y1="469.02" x2="464.70" y2="469.02" stroke="#222" stroke-width="1.2"/>
<line x1="460.5" y1="438.10" x2="469.5" y2="438.10" stroke="#1e1e8e" stroke-width="1.6"/>
<text x="458" y="442.00" text-anchor="end" font-size="11" fill="#14148a" font-family="Liberation Sans">80</text>
<line x1="462" y1="407.18" x2="464.70" y2="407.18" stroke="#222" stroke-width="1.2"/>
<line x1="460.5" y1="376.25" x2="469.5" y2="376.25" stroke="#1e1e8e" stroke-width="1.6"/>
<text x="458" y="380.15" text-anchor="end" font-size="11" fill="#14148a" font-family="Liberation Sans">100</text>
<line x1="462" y1="345.33" x2="464.70" y2="345.33" stroke="#222" stroke-width="1.2"/>
<line x1="460.5" y1="314.40" x2="469.5" y2="314.40" stroke="#1e1e8e" stroke-width="1.6"/>
<text x="458" y="318.30" text-anchor="end" font-size="11" fill="#14148a" font-family="Liberation Sans">120</text>
<line x1="464.70" y1="685.5" x2="464.70" y2="688.8" stroke="#141414" stroke-width="1.5"/>
<text x="465.20" y="703.3" text-anchor="middle" font-size="11" fill="#111" font-family="Liberation Sans">100,000</text>
<line x1="499.46" y1="685.50" x2="499.46" y2="687.2" stroke="#333" stroke-width="1.2"/>
<line x1="534.22" y1="685.50" x2="534.22" y2="687.2" stroke="#333" stroke-width="1.2"/>
<line x1="568.98" y1="681" x2="568.98" y2="688.8" stroke="#141414" stroke-width="1.5"/>
<text x="569.48" y="703.3" text-anchor="middle" font-size="11" fill="#111" font-family="Liberation Sans">150,000</text>
<line x1="603.74" y1="685.50" x2="603.74" y2="687.2" stroke="#333" stroke-width="1.2"/>
<line x1="638.50" y1="685.50" x2="638.50" y2="687.2" stroke="#333" stroke-width="1.2"/>
<line x1="673.26" y1="681" x2="673.26" y2="688.8" stroke="#141414" stroke-width="1.5"/>
<text x="673.76" y="703.3" text-anchor="middle" font-size="11" fill="#111" font-family="Liberation Sans">200,000</text>
<line x1="708.02" y1="685.50" x2="708.02" y2="687.2" stroke="#333" stroke-width="1.2"/>
<line x1="742.78" y1="685.50" x2="742.78" y2="687.2" stroke="#333" stroke-width="1.2"/>
<line x1="777.54" y1="681" x2="777.54" y2="688.8" stroke="#141414" stroke-width="1.5"/>
<text x="778.04" y="703.3" text-anchor="middle" font-size="11" fill="#111" font-family="Liberation Sans">250,000</text>
<line x1="812.30" y1="685.50" x2="812.30" y2="687.2" stroke="#333" stroke-width="1.2"/>
<line x1="847.06" y1="685.50" x2="847.06" y2="687.2" stroke="#333" stroke-width="1.2"/>
<line x1="881.82" y1="681" x2="881.82" y2="688.8" stroke="#141414" stroke-width="1.5"/>
<text x="882.32" y="703.3" text-anchor="middle" font-size="11" fill="#111" font-family="Liberation Sans">300,000</text>
<line x1="916.58" y1="685.50" x2="916.58" y2="687.2" stroke="#333" stroke-width="1.2"/>
<line x1="951.34" y1="685.50" x2="951.34" y2="687.2" stroke="#333" stroke-width="1.2"/>
<line x1="986.10" y1="681" x2="986.10" y2="688.8" stroke="#141414" stroke-width="1.5"/>
<text x="986.60" y="703.3" text-anchor="middle" font-size="11" fill="#111" font-family="Liberation Sans">350,000</text>
<line x1="1020.86" y1="685.50" x2="1020.86" y2="687.2" stroke="#333" stroke-width="1.2"/>
<line x1="1055.62" y1="685.50" x2="1055.62" y2="687.2" stroke="#333" stroke-width="1.2"/>
<line x1="1090.38" y1="681" x2="1090.38" y2="688.8" stroke="#141414" stroke-width="1.5"/>
<text x="1090.88" y="703.3" text-anchor="middle" font-size="11" fill="#111" font-family="Liberation Sans">400,000</text>
<text x="673.5" y="288.2" font-size="14.6" font-weight="bold" fill="#000" font-family="Liberation Sans">PDF Curve Overlay</text>
<line x1="797" y1="286.6" x2="809" y2="286.6" stroke="#0000ff" stroke-width="2"/>
<text x="813.5" y="292" font-size="11" fill="#111" font-family="Liberation Sans">Project DGS728 (FY 2014): Division:: Europe: Total Current Risk Level ($)</text>
<line x1="797" y1="304.8" x2="809" y2="304.8" stroke="#8c1ecf" stroke-width="2"/>
<text x="813.5" y="309.8" font-size="11" fill="#111" font-family="Liberation Sans">Project DGS728 (FY 2014): Division:: USA: Total Mitigation Cost ($)</text>
<text x="0" y="0" transform="translate(403.5 499) rotate(-90)" text-anchor="middle" font-size="10.6" fill="#14148a" font-family="Liberation Sans">Frequency</text>
</svg>
</body></html>
